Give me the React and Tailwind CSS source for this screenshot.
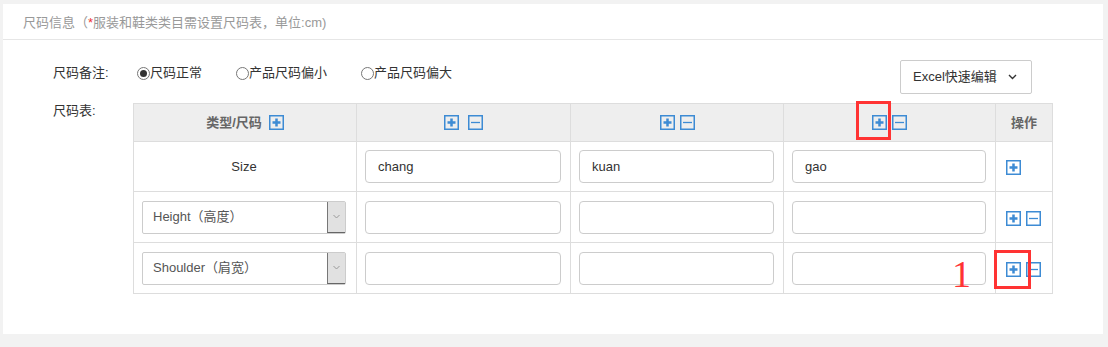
import React from "react";

const font = { fontFamily: "'Liberation Sans', 'Noto Sans CJK SC', sans-serif" };

function PlusIcon() {
  return (
    <svg width="15" height="15" viewBox="0 0 15 15" className="block shrink-0">
      <rect x="0.75" y="0.75" width="13.5" height="13.5" fill="none" stroke="#3d8bd4" strokeWidth="1.5" />
      <path d="M3.5 7.5h8M7.5 3.5v8" stroke="#3d8bd4" strokeWidth="2.5" />
    </svg>
  );
}

function MinusIcon() {
  return (
    <svg width="15" height="15" viewBox="0 0 15 15" className="block shrink-0">
      <rect x="0.75" y="0.75" width="13.5" height="13.5" fill="none" stroke="#3d8bd4" strokeWidth="1.5" />
      <path d="M3 7.5h9" stroke="#3d8bd4" strokeWidth="1.3" />
    </svg>
  );
}

function Radio({ checked, label }) {
  return (
    <span className="flex items-center">
      <span className="w-[13px] h-[13px] rounded-full border border-[#777] flex items-center justify-center bg-white">
        {checked && <span className="w-[7px] h-[7px] rounded-full bg-[#333]" />}
      </span>
      <span>{label}</span>
    </span>
  );
}

function Select({ value }) {
  return (
    <div className="flex h-[33px] w-full border border-[#ccc] rounded-[2px] bg-white">
      <div className="flex-1 flex items-center pl-[10px] text-[#555]">{value}</div>
      <div className="w-[18px] bg-[#e1e1e1] border-l border-l-[#777] border-b border-b-[#666] flex items-center justify-center">
        <svg width="7" height="5" viewBox="0 0 7 5">
          <path d="M0.5 1l3 3 3-3" fill="none" stroke="#999" strokeWidth="1" />
        </svg>
      </div>
    </div>
  );
}

function Input({ value }) {
  return (
    <div className="h-[33px] w-full border border-[#ccc] rounded-[4px] bg-white flex items-center pl-3 text-[#333]">
      {value}
    </div>
  );
}

const cell = "border-r border-b border-[#ddd] flex items-center";

export default function App() {
  const rows = [
    { type: null, values: ["chang", "kuan", "gao"] },
    { type: "Height（高度）", values: ["", "", ""] },
    { type: "Shoulder（肩宽）", values: ["", "", ""] },
  ];

  return (
    <div className="w-[1108px] h-[347px] bg-[#f2f2f2] pt-[4px] pl-[3px] pr-[5px] text-[13px]" style={font}>
      <div className="bg-white h-[330px]">
        {/* Header */}
        <div className="h-[36px] border-b border-[#e6e6e6] pl-[20px] pt-[3px] flex items-center text-[#999]">
          尺码信息（<span className="text-[#e33]">*</span>服装和鞋类类目需设置尺码表，单位:cm)
        </div>

        <div className="pl-[50px] pr-[51px] pt-[20px]">
          {/* Remarks row */}
          <div className="flex items-start">
            <div className="flex items-center mt-[3px] leading-[20px] text-[#333]">
              <span className="w-[84px]">尺码备注:</span>
              <div className="flex items-center gap-[34px]">
                <Radio checked label="尺码正常" />
                <Radio label="产品尺码偏小" />
                <Radio label="产品尺码偏大" />
              </div>
            </div>
            <button className="ml-auto mr-[20px] h-[34px] w-[132px] border border-[#ccc] rounded-[2px] flex items-center pl-[12px] text-[#333]">
              Excel快速编辑
              <svg width="9" height="6" viewBox="0 0 9 6" className="ml-[11px]">
                <path d="M1 1l3.5 3.5L8 1" fill="none" stroke="#333" strokeWidth="1.4" />
              </svg>
            </button>
          </div>

          {/* Size table row */}
          <div className="flex items-start mt-[9px]">
            <span className="w-[80px] shrink-0 leading-[16px] text-[#333]">尺码表:</span>
            <div className="relative">
              <div className="grid grid-cols-[223px_214px_213px_212px_57px] grid-rows-[38px_50px_51px_51px] border-l border-t border-[#ddd]">
                {/* header */}
                <div className={`${cell} bg-[#eee] justify-center gap-[7px] font-bold text-[#666]`}>
                  <span>类型/尺码</span>
                  <PlusIcon />
                </div>
                <div className={`${cell} bg-[#eee] justify-center gap-[9px]`}>
                  <PlusIcon />
                  <MinusIcon />
                </div>
                <div className={`${cell} bg-[#eee] justify-center gap-[5px]`}>
                  <PlusIcon />
                  <MinusIcon />
                </div>
                <div className={`${cell} bg-[#eee] justify-center gap-[5px]`}>
                  <PlusIcon />
                  <MinusIcon />
                </div>
                <div className={`${cell} bg-[#eee] justify-center font-bold text-[#666]`}>操作</div>

                {rows.map((r, i) => (
                  <React.Fragment key={i}>
                    <div className={`${cell} justify-center pl-[8px] pr-[10px]`}>
                      {r.type ? <Select value={r.type} /> : <span className="text-[#333]">Size</span>}
                    </div>
                    {r.values.map((v, j) => (
                      <div key={j} className={`${cell} pl-[8px] pr-[9px]`}>
                        <Input value={v} />
                      </div>
                    ))}
                    <div className={`${cell} pl-[10px] gap-[5px] pt-[2px]`}>
                      <PlusIcon />
                      {i > 0 && <MinusIcon />}
                    </div>
                  </React.Fragment>
                ))}
              </div>

              {/* annotations */}
              <div className="absolute left-[723px] top-[-2px] w-[35px] h-[39px] border-[3px] border-[#f33]" />
              <div className="absolute left-[861px] top-[147px] w-[37px] h-[39px] border-[3px] border-[#f33]" />
              <div
                className="absolute left-[819px] top-[152px] text-[38px] leading-none text-[#f33]"
                style={{ fontFamily: "'Liberation Serif', serif" }}
              >
                1
              </div>
            </div>
          </div>
        </div>
      </div>
    </div>
  );
}
